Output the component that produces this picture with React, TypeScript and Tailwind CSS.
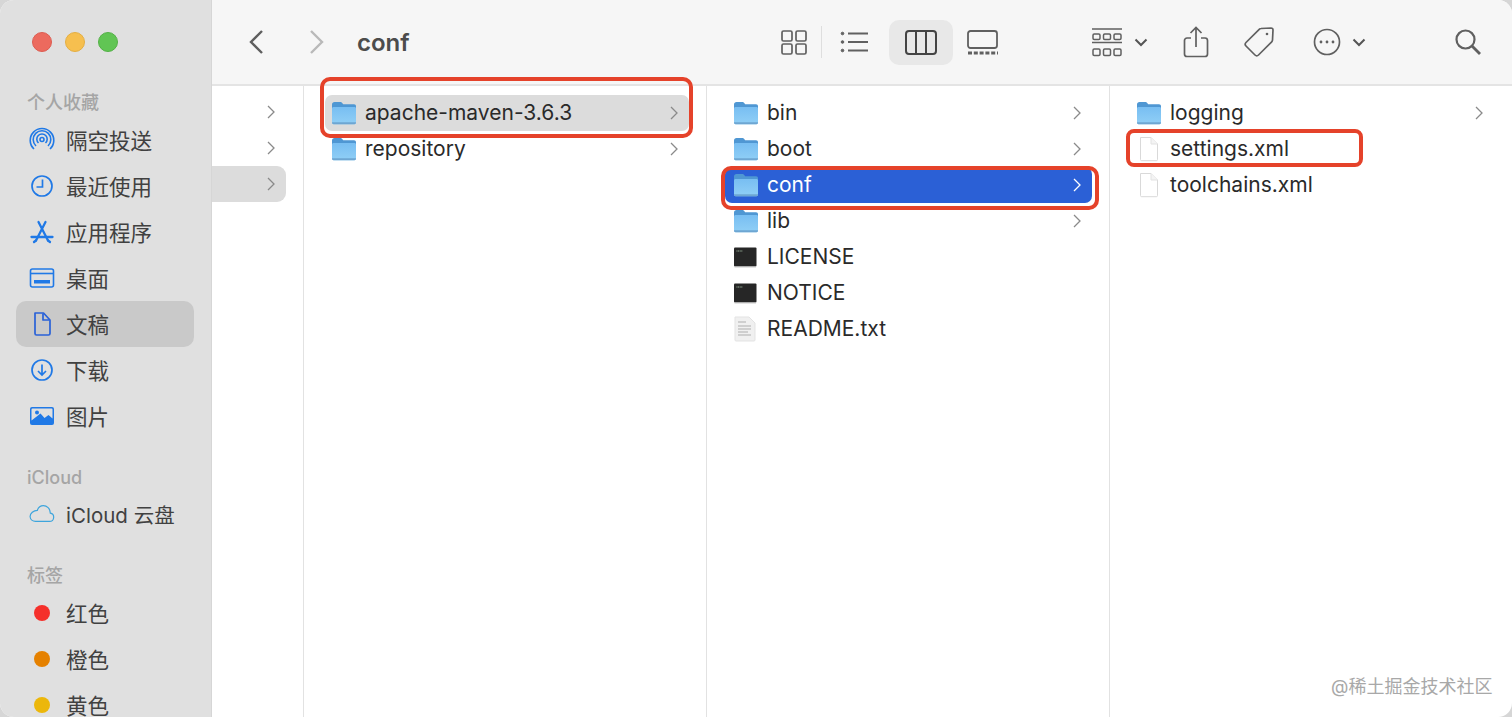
import { ReactNode } from "react";

const sans = "font-['Inter','Noto_Sans_CJK_SC',sans-serif]";

function Folder() {
  return (
    <svg width="26" height="26" viewBox="0 0 26 26" className="shrink-0">
      <defs>
        <linearGradient id="folderBody" x1="0" y1="0" x2="0" y2="1">
          <stop offset="0" stopColor="#78bef2" />
          <stop offset="1" stopColor="#90cff6" />
        </linearGradient>
      </defs>
      <path d="M1 4.500C1 3 2 2 3.500 2h5.700c.9 0 1.400.3 2 1l1 1.200H23c1.300 0 2 .8 2 2V10H1z" fill="#4f97d3" />
      <path d="M1 8.500C1 7.600 1.700 7 2.500 7h21c.9 0 1.500.6 1.500 1.500V22.800c0 .9-.7 1.400-1.500 1.400h-21C1.700 24.200 1 23.700 1 22.800z" fill="url(#folderBody)" />
      <path d="M1 22.800c0 .9.700 1.400 1.500 1.400h21c.8 0 1.500-.5 1.500-1.400V22.300H1z" fill="#6ea6d2" />
    </svg>
  );
}

function Chevron({ white }: { white?: boolean }) {
  return (
    <svg width="8" height="14" viewBox="0 0 8 14" fill="none" stroke={white ? "#ffffff" : "#8a8a8a"} strokeWidth="1.300" className="shrink-0">
      <path d="M1 1l6 6-6 6" />
    </svg>
  );
}

function Paper() {
  return (
    <svg width="26" height="26" viewBox="0 0 26 26" className="shrink-0">
      <path d="M4.500 1.500h10.500l6.500 6.500v15.500a1.200 1.200 0 0 1-1.200 1.200H5.700a1.200 1.200 0 0 1-1.200-1.200z" fill="#ffffff" stroke="#d9d9d9" />
      <path d="M15 1.500V8h6.500" fill="#f4f4f4" stroke="#e2e2e2" />
    </svg>
  );
}

function Terminal() {
  return (
    <svg width="26" height="22" viewBox="0 0 26 22" className="shrink-0">
      <rect x="1" y="1.500" width="22.500" height="19" rx="1" fill="#262626" />
      <path d="M3.500 5h6" stroke="#9fb8a0" strokeWidth="1.200" strokeDasharray="1 .6" />
      <path d="M1.500 21h21.500" stroke="#c9c9c9" strokeWidth="1" />
    </svg>
  );
}

function TextDoc() {
  return (
    <svg width="26" height="26" viewBox="0 0 26 26" className="shrink-0">
      <path d="M2 1h14l6 6v17a1 1 0 0 1-1 1H3a1 1 0 0 1-1-1z" fill="#f0f0f0" stroke="#e3e3e3" />
      <path d="M5 6h8M5 10h13M5 13h13M5 16h10M5 19h13" stroke="#c4c4c4" strokeWidth="1.300" />
    </svg>
  );
}

function Row({ icon, name, tone, arrow, pl, pr }: { icon: ReactNode; name: string; tone?: "gray" | "blue"; arrow?: boolean; pl: string; pr: string }) {
  return (
    <div
      className={`flex h-[36px] items-center ${pl} ${pr} rounded-[7px] text-[21px] ${
        tone === "blue" ? "bg-[#2b60d6] text-white" : tone === "gray" ? "bg-[#dcdcdc] text-[#2a2a2a]" : "text-[#2a2a2a]"
      }`}
    >
      {icon}
      <span className="ml-[8px] flex-1">{name}</span>
      {arrow && <Chevron white={tone === "blue"} />}
    </div>
  );
}

const blue = "#2079e6";

function Airdrop() {
  return (
    <svg width="26" height="26" viewBox="0 0 26 26" fill="none" stroke={blue} strokeWidth="1.600">
      <circle cx="13" cy="12.500" r="2" />
      <path d="M9.500 16a5.200 5.200 0 1 1 7 0" />
      <path d="M7 19a8.800 8.800 0 1 1 12 0" />
      <path d="M5 22a11.800 11.800 0 1 1 16 0" />
    </svg>
  );
}

function Clock() {
  return (
    <svg width="26" height="26" viewBox="0 0 26 26" fill="none" stroke={blue} strokeWidth="1.700">
      <circle cx="13" cy="13" r="10" />
      <path d="M13.500 6.500V14H7.500" />
    </svg>
  );
}

function AppStore() {
  return (
    <svg width="26" height="24" viewBox="0 0 26 24" fill="none" stroke={blue} strokeWidth="2.300" strokeLinecap="round">
      <path d="M9.500 2l9.500 18.500M16.500 2L7 20.500" />
      <path d="M2.500 17h21" />
      <path d="M19 20.500L21 22M7 20.500L5 22" />
    </svg>
  );
}

function Desktop() {
  return (
    <svg width="26" height="22" viewBox="0 0 26 22" fill="none" stroke={blue} strokeWidth="1.600">
      <rect x="1.500" y="2" width="23" height="18" rx="2" />
      <path d="M2 6.500h22" />
      <rect x="5" y="13" width="16" height="3.500" fill={blue} stroke="none" />
    </svg>
  );
}

function Doc() {
  return (
    <svg width="26" height="26" viewBox="0 0 26 26" fill="none" stroke="#2a62d8" strokeWidth="1.700" strokeLinejoin="round">
      <path d="M6 2h8.500L21 9v13.500a1.500 1.500 0 0 1-1.500 1.500h-12A1.500 1.500 0 0 1 6 22.500z" />
      <path d="M14 2.500V9h6.500" />
    </svg>
  );
}

function Download() {
  return (
    <svg width="26" height="26" viewBox="0 0 26 26" fill="none" stroke={blue} strokeWidth="1.700">
      <circle cx="13" cy="13" r="10" />
      <path d="M13 7.500v10M9 14l4 4 4-4" />
    </svg>
  );
}

function Photo() {
  return (
    <svg width="26" height="22" viewBox="0 0 26 22">
      <rect x="1" y="2" width="24" height="18" rx="2" fill={blue} />
      <path d="M2.500 4.500a1 1 0 0 1 1-1h19a1 1 0 0 1 1 1v9l-4-3.500-4 3-4-4.500-9 7z" fill="#e0e0e0" />
      <circle cx="8" cy="7.500" r="2" fill={blue} />
    </svg>
  );
}

function Cloud() {
  return (
    <svg width="28" height="22" viewBox="0 0 28 22" fill="none" stroke="#3ea5dc" strokeWidth="1.300">
      <path d="M7 19h15a4.500 4.500 0 0 0 1-8.900C23 5 19 2 15.500 2 12.500 2 10 4 9 7 5 7 1 10.500 1.200 14 1.400 17 4 19 7 19z" />
    </svg>
  );
}

function Dot({ color }: { color: string }) {
  return <span className={`mx-[5px] block size-[16px] rounded-full ${color}`} />;
}

function SideItem({ icon, label, active, small }: { icon: ReactNode; label: string; active?: boolean; small?: boolean }) {
  return (
    <div className={`mr-[17px] ml-[16px] flex h-[46px] items-center rounded-[10px] pl-[13px] text-[#414141] ${small ? "text-[20.500px]" : "text-[21.500px]"} ${active ? "bg-[#c9c9c9]" : ""}`}>
      <span className="flex w-[26px] items-center justify-center">{icon}</span>
      <span className={`ml-[11px] whitespace-nowrap ${small ? "translate-y-[2px]" : "translate-y-px"}`}>{label}</span>
    </div>
  );
}

function SideLabel({ text, cls }: { text: string; cls: string }) {
  return (
    <div className={`flex items-center pl-[27px] text-[18px] font-medium text-[#a5a5a5] ${cls}`}>
      <span className="translate-y-px">{text}</span>
    </div>
  );
}

function ToolChevron() {
  return (
    <svg width="14" height="9" viewBox="0 0 14 9" fill="none" stroke="#555" strokeWidth="2">
      <path d="M1.500 1.500L7 7l5.500-5.500" />
    </svg>
  );
}

function Toolbar() {
  return (
    <div className="flex h-[86px] shrink-0 items-center border-b-2 border-[#e4e4e4] bg-[#f6f6f6]">
      <svg width="20" height="26" viewBox="0 0 20 26" fill="none" stroke="#5e5e5e" strokeWidth="2.400" className="ml-[35px]">
        <path d="M15 2L4 13l11 11" />
      </svg>
      <svg width="20" height="26" viewBox="0 0 20 26" fill="none" stroke="#b9b9b9" strokeWidth="2.400" className="ml-[39px]">
        <path d="M5 2l11 11L5 24" />
      </svg>
      <span className="ml-[31px] w-[424px] translate-y-px text-[24px] font-semibold text-[#4c4c4c]">conf</span>

      <svg width="26" height="25" viewBox="0 0 26 25" fill="none" stroke="#606060" strokeWidth="1.700">
        <rect x="1" y="1" width="10" height="10" rx="1.500" />
        <rect x="15" y="1" width="10" height="10" rx="1.500" />
        <rect x="1" y="14" width="10" height="10" rx="1.500" />
        <rect x="15" y="14" width="10" height="10" rx="1.500" />
      </svg>
      <span className="ml-[14px] h-[32px] w-px bg-[#dedede]" />
      <svg width="29" height="22" viewBox="0 0 29 22" fill="none" stroke="#606060" className="ml-[18px]">
        <path d="M8 2.500h20M8 11h20M8 19.500h20" strokeWidth="1.800" />
        <circle cx="2.500" cy="2.500" r="1.300" fill="#606060" />
        <circle cx="2.500" cy="11" r="1.300" fill="#606060" />
        <circle cx="2.500" cy="19.500" r="1.300" fill="#606060" />
      </svg>
      <div className="ml-[20px] flex h-[45px] w-[64px] items-center justify-center rounded-[10px] bg-[#e8e8e8]">
        <svg width="32" height="25" viewBox="0 0 32 25" fill="none" stroke="#444" strokeWidth="2">
          <rect x="1" y="1" width="30" height="23" rx="3" />
          <path d="M11 1v23M21 1v23" />
        </svg>
      </div>
      <svg width="32" height="25" viewBox="0 0 32 25" fill="none" stroke="#606060" className="ml-[14px]">
        <rect x="1" y="1" width="29" height="17" rx="2.500" strokeWidth="1.800" />
        <path d="M1 23h30" strokeWidth="3" strokeDasharray="4 1.800" />
      </svg>

      <svg width="30" height="29" viewBox="0 0 30 29" fill="none" stroke="#606060" strokeWidth="1.500" className="ml-[93px]">
        <path d="M0 1h30M0 14.500h30" />
        <rect x="1" y="6" width="7" height="5.500" rx="1.200" />
        <rect x="11.500" y="6" width="7" height="5.500" rx="1.200" />
        <rect x="22" y="6" width="7" height="5.500" rx="1.200" />
        <rect x="1" y="21" width="7" height="6.500" rx="1.200" />
        <rect x="11.500" y="21" width="7" height="6.500" rx="1.200" />
        <rect x="22" y="21" width="7" height="6.500" rx="1.200" />
      </svg>
      <span className="ml-[12px] flex"><ToolChevron /></span>
      <svg width="26" height="32" viewBox="0 0 26 32" fill="none" stroke="#606060" strokeWidth="1.700" className="ml-[35px]">
        <path d="M8 12H4a2.500 2.500 0 0 0-2.500 2.500V28A2.500 2.500 0 0 0 4 30.500h18a2.500 2.500 0 0 0 2.500-2.500V14.500A2.500 2.500 0 0 0 22 12h-4" />
        <path d="M13 21V2M7.500 7L13 1.500 18.500 7" />
      </svg>
      <svg width="32" height="32" viewBox="0 0 32 32" fill="none" stroke="#606060" strokeWidth="1.700" className="ml-[34px]">
        <path d="M18 2.500l10-.5c1.200 0 2 .8 2 2l-.5 10c0 .7-.3 1.300-.8 1.800L15.500 29a2.500 2.500 0 0 1-3.500 0L3 20a2.500 2.500 0 0 1 0-3.500L16.200 3.300c.5-.5 1.100-.8 1.800-.8z" />
        <circle cx="24" cy="8" r="1.300" fill="#606060" stroke="none" />
      </svg>
      <svg width="28" height="28" viewBox="0 0 28 28" fill="none" stroke="#606060" strokeWidth="1.700" className="ml-[38px]">
        <circle cx="14" cy="14" r="12.500" />
        <circle cx="8" cy="14" r="1.400" fill="#606060" stroke="none" />
        <circle cx="14" cy="14" r="1.400" fill="#606060" stroke="none" />
        <circle cx="20" cy="14" r="1.400" fill="#606060" stroke="none" />
      </svg>
      <span className="ml-[11px] flex"><ToolChevron /></span>
      <svg width="28" height="28" viewBox="0 0 28 28" fill="none" stroke="#606060" strokeWidth="2.200" className="ml-[88px]">
        <circle cx="11.500" cy="11.500" r="9" />
        <path d="M18 18l8 8" strokeWidth="2.800" />
      </svg>
    </div>
  );
}

export default function App() {
  return (
    <div className={`relative h-[717px] w-[1512px] overflow-hidden bg-[#d6d6d6] ${sans}`}>
      <div className="flex h-full overflow-hidden rounded-[14px] bg-white">
        <aside className="h-full w-[212px] shrink-0 overflow-hidden border-r border-[#d6d6d6] bg-[#e0e0e0] pt-[32px]">
          <div className="flex h-[20px] items-center gap-[13px] pl-[32px]">
            <span className="size-[20px] rounded-full border border-[#dd5c51] bg-[#ec6a5e]" />
            <span className="size-[20px] rounded-full border border-[#e4ae42] bg-[#f6bf4f]" />
            <span className="size-[20px] rounded-full border border-[#54b147] bg-[#61c554]" />
          </div>
          <SideLabel text="个人收藏" cls="mt-[33px] h-[32px]" />
          <SideItem icon={<Airdrop />} label="隔空投送" />
          <SideItem icon={<Clock />} label="最近使用" />
          <SideItem icon={<AppStore />} label="应用程序" />
          <SideItem icon={<Desktop />} label="桌面" />
          <SideItem icon={<Doc />} label="文稿" active />
          <SideItem icon={<Download />} label="下载" />
          <SideItem icon={<Photo />} label="图片" />
          <SideLabel text="iCloud" cls="mt-[22px] h-[30px]" />
          <SideItem icon={<Cloud />} label="iCloud 云盘" small />
          <SideLabel text="标签" cls="mt-[22px] h-[31px]" />
          <SideItem icon={<Dot color="bg-[#f5302b]" />} label="红色" />
          <SideItem icon={<Dot color="bg-[#e58100]" />} label="橙色" />
          <SideItem icon={<Dot color="bg-[#ecb70b]" />} label="黄色" />
        </aside>

        <main className="flex min-w-0 flex-1 flex-col">
          <Toolbar />
          <div className="flex min-h-0 flex-1">
            <section className="w-[92px] shrink-0 border-r border-[#e2e2e2] pt-[8px] pr-[17px]">
              {[false, false, true].map((on, i) => (
                <div key={i} className={`flex h-[36px] items-center justify-end pr-[11px] ${on ? "rounded-r-[9px] bg-[#dcdcdc]" : ""}`}>
                  <Chevron />
                </div>
              ))}
            </section>

            <section className="w-[403px] shrink-0 border-r border-[#e2e2e2] pt-[9px] pr-[17px] pl-[21px]">
              <Row icon={<Folder />} name="apache-maven-3.6.3" tone="gray" arrow pl="pl-[6px]" pr="pr-[11px]" />
              <Row icon={<Folder />} name="repository" arrow pl="pl-[6px]" pr="pr-[11px]" />
            </section>

            <section className="w-[403px] shrink-0 border-r border-[#e2e2e2] pt-[9px] pr-[17px] pl-[18px]">
              <Row icon={<Folder />} name="bin" arrow pl="pl-[8px]" pr="pr-[11px]" />
              <Row icon={<Folder />} name="boot" arrow pl="pl-[8px]" pr="pr-[11px]" />
              <Row icon={<Folder />} name="conf" tone="blue" arrow pl="pl-[8px]" pr="pr-[11px]" />
              <Row icon={<Folder />} name="lib" arrow pl="pl-[8px]" pr="pr-[11px]" />
              <Row icon={<Terminal />} name="LICENSE" pl="pl-[8px]" pr="pr-[11px]" />
              <Row icon={<Terminal />} name="NOTICE" pl="pl-[8px]" pr="pr-[11px]" />
              <Row icon={<TextDoc />} name="README.txt" pl="pl-[8px]" pr="pr-[11px]" />
            </section>

            <section className="min-w-0 flex-1 pt-[9px] pr-[19px] pl-[18px]">
              <Row icon={<Folder />} name="logging" arrow pl="pl-[8px]" pr="pr-[10px]" />
              <Row icon={<Paper />} name="settings.xml" pl="pl-[8px]" pr="pr-[10px]" />
              <Row icon={<Paper />} name="toolchains.xml" pl="pl-[8px]" pr="pr-[10px]" />
            </section>
          </div>
        </main>
      </div>

      <div className="absolute top-[77px] left-[320px] h-[61px] w-[373px] rounded-[10px] border-4 border-[#e5422a]" />
      <div className="absolute top-[166px] left-[721px] h-[44px] w-[378px] rounded-[10px] border-4 border-[#e5422a]" />
      <div className="absolute top-[129px] left-[1126px] h-[38px] w-[237px] rounded-[8px] border-4 border-[#e5422a]" />
      <span className="absolute top-[673px] left-[1331px] text-[18px] text-[#a8a8a8]">@稀土掘金技术社区</span>
    </div>
  );
}
